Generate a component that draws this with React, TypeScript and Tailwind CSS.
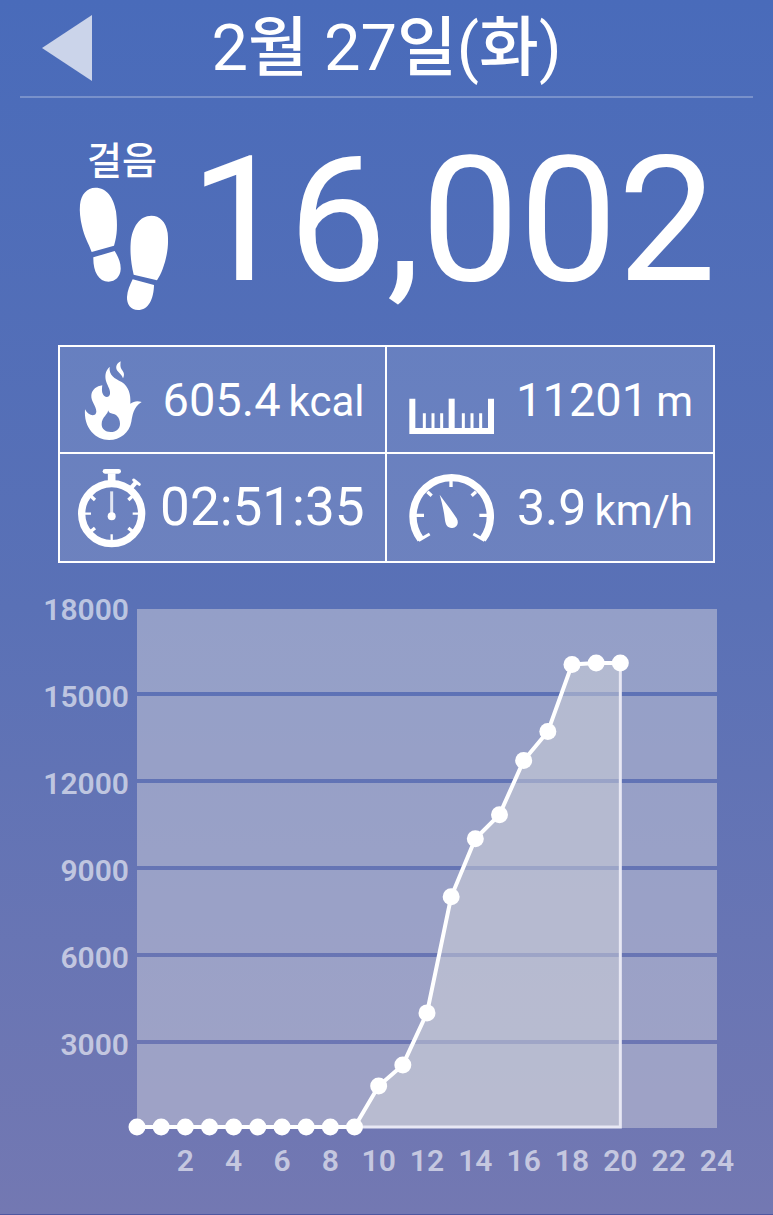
import type { ReactNode } from "react";

type Stat = {
  label: string;
  value: string;
  unit?: string;
  valueClass: string;
  icon: ReactNode;
};

// cumulative steps, one value per hour starting at midnight
const HOURLY_STEPS = [
  0, 0, 0, 0, 0, 0, 0, 0, 0, 0, 1415, 2140, 3935, 7940, 9940, 10770, 12635,
  13635, 15950, 16002, 16002,
];

const Y_TICKS = [3000, 6000, 9000, 12000, 15000, 18000];
const X_TICKS = [2, 4, 6, 8, 10, 12, 14, 16, 18, 20, 22, 24];

const PLOT = { left: 137, right: 717, top: 19, base: 538 };

function xAt(hour: number) {
  return PLOT.left + (hour * (PLOT.right - PLOT.left)) / 24;
}

function yAt(steps: number) {
  return PLOT.base - 1 - (steps * 87) / 3000;
}

function Footprints() {
  return (
    <svg viewBox="56 172 270 372" className="h-[124px] w-[90px]" fill="white" aria-hidden="true">
      <path d="M94 367C84 340 72 322 65 290C60 268 57 245 59 225C62 194 80 174 105 174C140 174 160 205 167 245C172 285 171 318 161 348Z" />
      <path d="M99 383L163 364C174 382 182 399 181 419C180 441 165 456 145 456C114 456 98 425 99 383Z" />
      <path d="M220 435C212 400 209 370 211 340C215 292 238 258 273 258C298 258 317 276 322 310C326 350 319 385 307 418C302 432 296 442 290 452Z" />
      <path d="M217 449L281 466C280 510 264 541 233 541C211 541 199 523 200 502C201 482 209 466 217 449Z" />
    </svg>
  );
}

function FlameIcon() {
  return (
    <svg viewBox="84 75 204 240" className="h-20 w-[68px]" fill="white" aria-hidden="true">
      <path d="M212 79C198 86 196 98 202 107C208 115 216 119 219 130C225 119 221 111 216 105C210 97 211 90 212 79Z" />
      <path
        fillRule="evenodd"
        d="M179 95C165 108 164 125 169 141C174 155 182 166 180 177C178 187 169 188 163 183C155 176 155 164 157 151C140 153 126 164 124 180C122 199 139 213 139 230C138 245 117 246 105 223C103 249 109 273 125 291C139 307 157 315 177 315C211 314 238 293 244 260C248 239 250 217 275 201C262 196 251 199 241 206C243 179 236 154 215 141C194 130 176 121 179 95ZM174 226C176 237 155 246 155 268C155 282 166 291 182 291C199 291 210 281 210 266C210 247 197 236 188 236C181 236 176 232 174 226Z"
      />
    </svg>
  );
}

function StopwatchIcon() {
  return (
    <svg viewBox="84 54 204 240" className="h-20 w-[68px]" fill="none" stroke="white" aria-hidden="true">
      <circle cx="185" cy="191" r="90" strokeWidth="22" />
      <path d="M185 70V98" strokeWidth="23" />
      <path d="M165 64H206" strokeWidth="14" strokeLinecap="round" />
      <path d="M244 113L258 97" strokeWidth="13" />
      <path d="M251 90L268 103" strokeWidth="9" strokeLinecap="round" />
      <path d="M185 124V190" strokeWidth="9" strokeOpacity="0.8" />
      <path d="M104 191H123M248 191H267M185 253V273" strokeWidth="7" />
      <path d="M123 139L135 150M247 139L235 150M123 244L135 234M247 244L235 234" strokeWidth="10" />
      <circle cx="185" cy="199" r="12" fill="white" stroke="none" />
    </svg>
  );
}

function RulerIcon() {
  return (
    <svg viewBox="87 75 255 240" className="h-20 w-[85px]" fill="none" stroke="white" aria-hidden="true">
      <path d="M97 191V288H333V191" strokeWidth="18" />
      <path d="M215 191V285" strokeWidth="18" />
      <path d="M133 235V285M159 235V285M185 235V285M250 235V285M276 235V285M302 235V285" strokeWidth="9" />
    </svg>
  );
}

function GaugeIcon() {
  return (
    <svg viewBox="87 54 255 240" className="h-20 w-[85px]" fill="none" stroke="white" aria-hidden="true">
      <path d="M122 268A116 116 0 1 1 308 268" strokeWidth="22" />
      <path d="M213 85V111M142 125L155 137M288 125L275 137M108 196H132M322 196H298" strokeWidth="10" />
      <path d="M116 271L149 252M314 271L280 252" strokeWidth="9" />
      <path d="M179 134C196 158 215 181 230 205C238 219 231 233 217 234C203 235 197 225 195 211C192 184 186 158 179 134Z" fill="white" stroke="none" />
    </svg>
  );
}

const STATS: Stat[] = [
  { label: "칼로리", value: "605.4", unit: "kcal", valueClass: "text-[47px]", icon: <FlameIcon /> },
  { label: "거리", value: "11201", unit: "m", valueClass: "text-[47px]", icon: <RulerIcon /> },
  { label: "시간", value: "02:51:35", valueClass: "text-[53px]", icon: <StopwatchIcon /> },
  { label: "속도", value: "3.9", unit: "km/h", valueClass: "text-[50px]", icon: <GaugeIcon /> },
];

function StatCell({ stat, className }: { stat: Stat; className: string }) {
  return (
    <div className={`flex items-center justify-between border-white pr-5 ${className}`}>
      <dt aria-label={stat.label}>{stat.icon}</dt>
      <dd className="flex items-baseline gap-2 leading-none whitespace-nowrap">
        <span className={stat.valueClass}>{stat.value}</span>
        {stat.unit && <span className="text-[42px]">{stat.unit}</span>}
      </dd>
    </div>
  );
}

function StepsChart() {
  const points = HOURLY_STEPS.map((steps, hour) => `${xAt(hour)},${yAt(steps)}`);
  const lastX = xAt(HOURLY_STEPS.length - 1);
  const firstStepHour = 9;

  return (
    <svg viewBox="0 0 773 600" className="block w-full" role="img" aria-label="시간별 걸음 수">
      {Y_TICKS.map((tick) => {
        const top = Math.max(PLOT.top, yAt(tick) + 4);
        const bottom = tick === 3000 ? PLOT.base : yAt(tick - 3000);
        return (
          <rect
            key={tick}
            x={PLOT.left}
            y={top}
            width={PLOT.right - PLOT.left}
            height={bottom - top}
            fill="#cecdda"
            fillOpacity="0.5"
          />
        );
      })}

      <polygon
        points={`${points.join(" ")} ${lastX},${PLOT.base}`}
        fill="#d2d3d9"
        fillOpacity="0.5"
      />
      <path
        d={`M${xAt(firstStepHour)} ${PLOT.base - 1}H${lastX}V${yAt(16002)}`}
        fill="none"
        stroke="#e8e8f4"
        strokeWidth="3"
      />
      <polyline points={points.join(" ")} fill="none" stroke="white" strokeWidth="4" />
      {HOURLY_STEPS.map((steps, hour) => (
        <circle key={hour} cx={xAt(hour)} cy={yAt(steps)} r="8.5" fill="white" />
      ))}

      <g fill="white" fillOpacity="0.6" fontSize="30" fontWeight="600">
        {Y_TICKS.map((tick) => (
          <text key={tick} x="129" y={yAt(tick) + 15} textAnchor="end">
            {tick}
          </text>
        ))}
        {X_TICKS.map((hour) => (
          <text key={hour} x={xAt(hour)} y="581" textAnchor="middle">
            {hour}
          </text>
        ))}
      </g>
    </svg>
  );
}

export default function App() {
  return (
    <main className="min-h-screen border-b border-[#4f57a0] bg-linear-to-b from-[#496bba] via-[#5a71b6] to-[#7378b2] font-[Roboto,'Noto_Sans_CJK_KR',sans-serif] text-white">
      <header className="mx-5 grid h-[98px] grid-cols-[72px_1fr_72px] items-center border-b-2 border-white/25">
        <button type="button" aria-label="이전 날짜" className="justify-self-end">
          <svg viewBox="0 0 50 66" className="h-[66px] w-[50px]" aria-hidden="true">
            <path d="M0 33L50 0V66Z" fill="#cbd4ea" />
          </svg>
        </button>
        <h1 className="text-center text-[65px] leading-none font-medium whitespace-nowrap">
          <span className="font-normal">2</span>월 <span className="font-normal">27</span>일
          <span className="font-normal">(</span>화<span className="font-normal">)</span>
        </h1>
      </header>

      <section className="flex items-start justify-between pt-[38px] pr-[57px] pl-[79px]">
        <div className="flex w-[90px] flex-col items-center">
          <span className="pr-1 text-[38px] leading-[51px] font-medium">걸음</span>
          <Footprints />
        </div>
        <p className="text-[175px] leading-[170px]">16,002</p>
      </section>

      <dl className="mx-[58px] mt-[34px] grid grid-cols-2 grid-rows-[107px_107px] border-2 border-white bg-white/12">
        <StatCell stat={STATS[0]} className="border-r-2 border-b-2 pl-[18px]" />
        <StatCell stat={STATS[1]} className="border-b-2 pl-[22px]" />
        <StatCell stat={STATS[2]} className="border-r-2 pl-[18px]" />
        <StatCell stat={STATS[3]} className="pl-[22px]" />
      </dl>

      <section className="mt-[27px]">
        <StepsChart />
      </section>
    </main>
  );
}
